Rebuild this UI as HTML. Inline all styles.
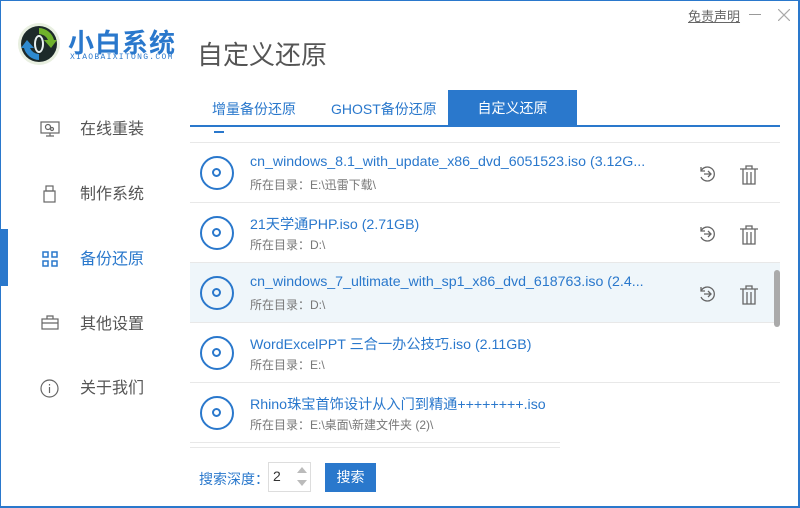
<!DOCTYPE html><html><head><meta charset="utf-8"><style>
*{margin:0;padding:0;box-sizing:border-box}
body{width:800px;height:508px;overflow:hidden;background:#fff;font-family:"Liberation Sans","Noto Sans CJK SC",sans-serif;position:relative}
.frame{position:absolute;left:0;top:0;width:800px;height:508px;border:1px solid #2a78cc;border-width:1px 2px 2px 1px}
.abs{position:absolute}
.nav{position:absolute;left:80px;font-size:16px;color:#555}
.navic{position:absolute;left:40px}
.row{position:absolute;left:190px;width:590px;height:60px;border-bottom:1px solid #e8e8e8}
.disc{position:absolute;left:10px;top:13px;width:34px;height:34px;border:2.5px solid #2a78cc;border-radius:50%}
.disc:after{content:"";position:absolute;left:10px;top:10px;width:9px;height:9px;border:2.5px solid #2a78cc;border-radius:50%;box-sizing:border-box}
.t{position:absolute;left:60px;top:11px;font-size:14.2px;color:#2a78cc;white-space:nowrap}
.p{position:absolute;left:60px;top:33px;font-size:12px;color:#777;white-space:nowrap}
.ic{position:absolute;top:22px}
</style></head><body>
<div class="frame"></div>
<svg class="abs" style="left:17px;top:22px" width="44" height="44" viewBox="0 0 44 44">
<circle cx="22" cy="22" r="21" fill="#e8efe0"/><circle cx="22" cy="22" r="18" fill="#1d2a2a"/>
<path d="M22 6a16 16 0 0 1 15 12l3 0-6 8-7-8 4 0a10 10 0 0 0-9-6z" fill="#6fb22c"/>
<path d="M22 38a16 16 0 0 1-15-12l-3 0 6-8 7 8-4 0a10 10 0 0 0 9 6z" fill="#2e8ad0"/>
<ellipse cx="22" cy="22" rx="5" ry="9" fill="#e8f0f0"/><ellipse cx="22" cy="22" rx="3" ry="7" fill="#1d2a2a"/></svg>
<div class="abs" style="left:68px;top:23px;font-size:26px;font-weight:bold;color:#2a78cc;letter-spacing:1px">小白系统</div>
<div class="abs" style="left:70px;top:53px;font-size:8px;color:#2a78cc;letter-spacing:1.3px;font-family:'Liberation Mono',monospace">XIAOBAIXITONG.COM</div>
<div class="abs" style="left:197px;top:35px;font-size:26px;color:#555">自定义还原</div>
<div class="abs" style="left:688px;top:6px;font-size:13px;color:#666;text-decoration:underline">免责声明</div>
<div class="abs" style="left:749px;top:14px;width:12px;height:1px;background:#999"></div>
<svg class="abs" style="left:778px;top:9px" width="12" height="12"><path d="M0 0L12 12M12 0L0 12" stroke="#aaa" stroke-width="1.2"/></svg>
<div class="abs" style="left:0;top:229px;width:8px;height:57px;background:#2a78cc"></div>
<svg class="navic" style="top:121px" width="20" height="16" viewBox="0 0 20 16" fill="none" stroke="#666" stroke-width="1.2"><rect x="1" y="1" width="18" height="11"/><circle cx="8" cy="6" r="2.5"/><circle cx="12" cy="8" r="1.5"/><path d="M10 12v3M6 15h8"/></svg>
<div class="nav" style="top:115px">在线重装</div>
<svg class="navic" style="top:185px;left:43px" width="14" height="18" fill="none" stroke="#666" stroke-width="1.2"><rect x="1" y="6" width="11" height="11"/><rect x="3" y="1" width="7" height="5"/></svg>
<div class="nav" style="top:180px">制作系统</div>
<svg class="navic" style="top:251px;left:42px" width="17" height="16" fill="none" stroke="#2a78cc" stroke-width="1.5"><rect x="1" y="1" width="5" height="5"/><rect x="10" y="1" width="5" height="5"/><rect x="1" y="10" width="5" height="5"/><rect x="10" y="10" width="5" height="5"/></svg>
<div class="nav" style="top:245px;color:#2a78cc">备份还原</div>
<svg class="navic" style="top:315px;left:41px" width="18" height="15" fill="none" stroke="#666" stroke-width="1.2"><rect x="1" y="4" width="16" height="10"/><path d="M6 4V1h6v3M1 8h16"/></svg>
<div class="nav" style="top:310px">其他设置</div>
<svg class="navic" style="top:379px;left:40px" width="19" height="19" fill="none" stroke="#666" stroke-width="1.2"><circle cx="9.5" cy="9.5" r="8.5"/><path d="M9.5 8v6M9.5 5v1.5"/></svg>
<div class="nav" style="top:374px">关于我们</div>
<div class="abs" style="left:212px;top:99px;font-size:14px;color:#2a78cc">增量备份还原</div>
<div class="abs" style="left:331px;top:99px;font-size:14px;color:#2a78cc">GHOST备份还原</div>
<div class="abs" style="left:448px;top:90px;width:129px;height:35px;background:#2a78cc;color:#fff;font-size:14px;text-align:center;line-height:37px">自定义还原</div>
<div class="abs" style="left:190px;top:125px;width:590px;height:2px;background:#2a78cc"></div>
<div class="abs" style="left:190px;top:142px;width:590px;height:1px;background:#e8e8e8"></div>
<div class="abs" style="left:214px;top:131px;width:10px;height:2px;background:#2a78cc"></div>
<div class="row" style="top:143px"><div class="disc"></div><div class="t">cn_windows_8.1_with_update_x86_dvd_6051523.iso (3.12G...</div><div class="p">所在目录：E:\迅雷下载\</div>
<svg class="ic" style="left:508px" width="18" height="18" fill="none" stroke="#666" stroke-width="1.3"><path d="M3 6A7 7 0 1 1 3 12M3 2v4h4M6 9h7M10 6l3 3-3 3"/></svg>
<svg class="ic" style="left:549px" width="20" height="20" fill="none" stroke="#666" stroke-width="1.3"><path d="M1 4h18M7 4V1h6v3M4 4v15h12V4M8 7v12M12 7v12"/></svg></div>
<div class="row" style="top:203px"><div class="disc"></div><div class="t">21天学通PHP.iso (2.71GB)</div><div class="p">所在目录：D:\</div>
<svg class="ic" style="left:508px" width="18" height="18" fill="none" stroke="#666" stroke-width="1.3"><path d="M3 6A7 7 0 1 1 3 12M3 2v4h4M6 9h7M10 6l3 3-3 3"/></svg>
<svg class="ic" style="left:549px" width="20" height="20" fill="none" stroke="#666" stroke-width="1.3"><path d="M1 4h18M7 4V1h6v3M4 4v15h12V4M8 7v12M12 7v12"/></svg></div>
<div class="row" style="top:263px;background:#eff6fa"><div class="disc"></div><div class="t">cn_windows_7_ultimate_with_sp1_x86_dvd_618763.iso (2.4...</div><div class="p">所在目录：D:\</div>
<svg class="ic" style="left:508px" width="18" height="18" fill="none" stroke="#666" stroke-width="1.3"><path d="M3 6A7 7 0 1 1 3 12M3 2v4h4M6 9h7M10 6l3 3-3 3"/></svg>
<svg class="ic" style="left:549px" width="20" height="20" fill="none" stroke="#666" stroke-width="1.3"><path d="M1 4h18M7 4V1h6v3M4 4v15h12V4M8 7v12M12 7v12"/></svg></div>
<div class="row" style="top:323px"><div class="disc"></div><div class="t">WordExcelPPT 三合一办公技巧.iso (2.11GB)</div><div class="p">所在目录：E:\</div></div>
<div class="row" style="top:383px;width:370px"><div class="disc"></div><div class="t">Rhino珠宝首饰设计从入门到精通++++++++.iso</div><div class="p">所在目录：E:\桌面\新建文件夹 (2)\</div></div>
<div class="abs" style="left:190px;top:447px;width:370px;height:1px;background:#e8e8e8"></div>
<div class="abs" style="left:774px;top:270px;width:6px;height:57px;background:#aaa;border-radius:3px"></div>
<div class="abs" style="left:199px;top:469px;font-size:14px;color:#2a78cc">搜索深度：</div>
<div class="abs" style="left:268px;top:462px;width:43px;height:30px;border:1px solid #ddd;font-size:14px;color:#333;padding:5px 0 0 4px">2</div>
<div class="abs" style="left:297px;top:467px;width:0;height:0;border:5px solid transparent;border-bottom:6px solid #bbb;border-top:0"></div>
<div class="abs" style="left:297px;top:480px;width:0;height:0;border:5px solid transparent;border-top:6px solid #bbb;border-bottom:0"></div>
<div class="abs" style="left:325px;top:463px;width:51px;height:29px;background:#2a78cc;color:#fff;font-size:14px;text-align:center;line-height:29px">搜索</div>
</body></html>
